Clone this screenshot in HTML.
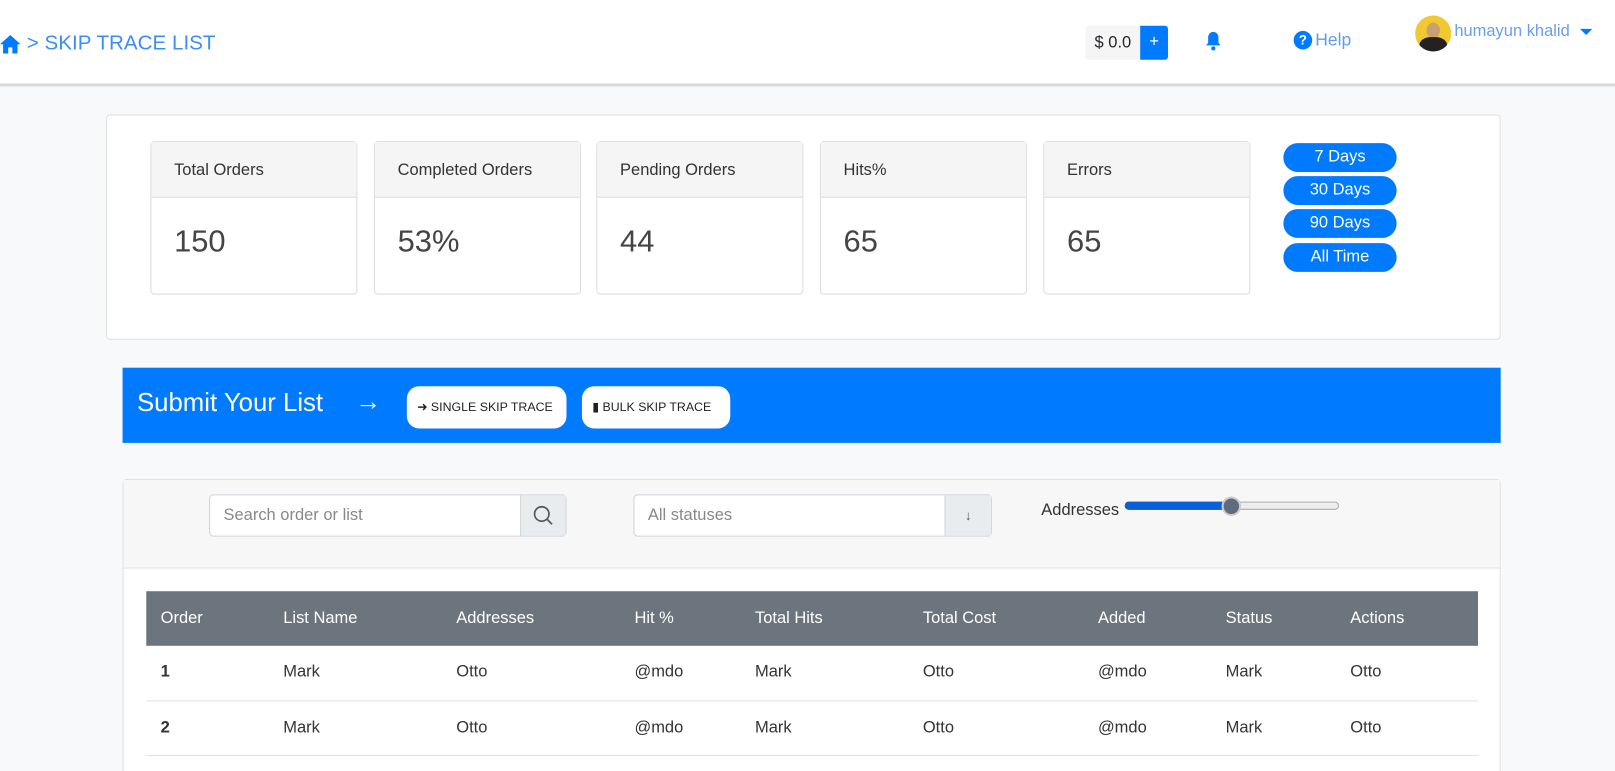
<!DOCTYPE html>
<html><head><style>
*{box-sizing:border-box;margin:0;padding:0}
html,body{width:1615px;height:771px;overflow:hidden;background:#f8f9fa}
#w{width:1568px;height:749px;position:relative;transform:scale(1.02997);transform-origin:0 0;font-family:"Liberation Sans",sans-serif;color:#212529}
.hdr{position:absolute;left:0;top:0;width:1568px;height:84px;background:#fff;border-bottom:3px solid #d9d9d9}
.abs{position:absolute}
.card{position:absolute;top:137px;width:201px;height:149px;border:1px solid #dcdcdc;border-radius:4px;background:#fff}
.card .h{height:54px;background:#f5f5f5;border-bottom:1px solid #dcdcdc;padding:19px 0 0 22px;font-size:16px;color:#333}
.card .v{padding:26px 0 0 22px;font-size:30px;color:#444;font-weight:300}
.pill{position:absolute;left:1246px;width:110px;height:28px;background:#007bff;color:#fff;border-radius:14px;text-align:center;font-size:16px;line-height:28px}
.btn{position:absolute;top:375px;height:41px;background:#fff;border-radius:12px;font-size:12px;color:#222;line-height:41px;padding-left:10px}
.hbar{position:absolute;left:142px;top:574px;width:1293px;height:53px;background:#6c757d}
th{background:transparent;color:#fff;font-weight:normal;text-align:left;font-size:16px;height:53px;padding-left:14px;border:none}
td{font-size:16px;height:53px;padding-left:14px;border-bottom:1px solid #dee2e6;color:#333}
</style></head><body><div id="w">
<div class="hdr">
 <svg class="abs" style="left:0;top:34px" width="20" height="18" viewBox="0 0 20 18"><path d="M10 0 L20 9 L17 9 L17 18 L12 18 L12 12 L8 12 L8 18 L3 18 L3 9 L0 9Z" fill="#007bff"/></svg>
 <div class="abs" style="left:26px;top:31px;font-size:20px;color:#3b8ef7">&gt; SKIP TRACE LIST</div>
 <div class="abs" style="left:1054px;top:25px;width:53px;height:33px;background:#f5f5f5;font-size:16px;line-height:33px;text-align:center;border-radius:3px 0 0 3px">$ 0.0</div>
 <div class="abs" style="left:1107px;top:25px;width:27px;height:33px;background:#007bff;color:#fff;text-align:center;line-height:32px;font-size:16px;border-radius:0 3px 3px 0">+</div>
 <svg class="abs" style="left:1170px;top:30px" width="16" height="20" viewBox="0 0 16 20"><path d="M8 1c-3 0-5 2.5-5 5.5v5L1 14h14l-2-2.5v-5C13 3.5 11 1 8 1z" fill="#007bff"/><circle cx="8" cy="17" r="2" fill="#007bff"/></svg>
 <div class="abs" style="left:1256px;top:30px;width:18px;height:18px;border-radius:50%;background:#007bff;color:#fff;font-size:13px;font-weight:bold;text-align:center;line-height:18px">?</div>
 <div class="abs" style="left:1277px;top:29px;font-size:17px;color:#5d9cf5">Help</div>
 <div class="abs" style="left:1374px;top:15px;width:35px;height:35px;border-radius:50%;overflow:hidden;background:#f0c830"><div style="position:absolute;left:11px;top:7px;width:13px;height:15px;border-radius:50%;background:#c9a071"></div><div style="position:absolute;left:4px;top:21px;width:27px;height:20px;border-radius:40% 40% 0 0;background:#222"></div></div>
 <div class="abs" style="left:1412px;top:22px;font-size:16px;color:#6a9ef0">humayun khalid</div>
 <div class="abs" style="left:1534px;top:28px;border-left:6px solid transparent;border-right:6px solid transparent;border-top:6px solid #007bff"></div>
</div>
<div class="abs" style="left:103px;top:111px;width:1354px;height:219px;background:#fff;border:1px solid #e0e0e0;border-radius:4px"></div>
<div class="card" style="left:146px"><div class="h">Total Orders</div><div class="v">150</div></div>
<div class="card" style="left:363px"><div class="h">Completed Orders</div><div class="v">53%</div></div>
<div class="card" style="left:579px"><div class="h">Pending Orders</div><div class="v">44</div></div>
<div class="card" style="left:796px"><div class="h">Hits%</div><div class="v">65</div></div>
<div class="card" style="left:1013px"><div class="h">Errors</div><div class="v">65</div></div>
<div class="pill" style="top:139px">7 Days</div>
<div class="pill" style="top:171px">30 Days</div>
<div class="pill" style="top:203px">90 Days</div>
<div class="pill" style="top:236px">All Time</div>
<div class="abs" style="left:119px;top:357px;width:1338px;height:73px;background:#007bff"></div>
<div class="abs" style="left:133px;top:377px;font-size:25px;color:#fff">Submit Your List</div>
<div class="abs" style="left:345px;top:376px;font-size:25px;color:#fff">&rarr;</div>
<div class="btn" style="left:395px;width:155px">&#10140; SINGLE SKIP TRACE</div>
<div class="btn" style="left:565px;width:144px">&#9646; BULK SKIP TRACE</div>
<div class="abs" style="left:119px;top:465px;width:1338px;height:320px;background:#fff;border:1px solid #e0e0e0;border-radius:4px"></div>
<div class="abs" style="left:120px;top:466px;width:1336px;height:86px;background:#f7f7f7;border-bottom:1px solid #e0e0e0"></div>
<div class="abs" style="left:203px;top:480px;width:347px;height:41px;border:1px solid #ced4da;border-radius:4px;background:#fff;font-size:16px;color:#888;padding:11px 0 0 13px">Search order or list</div>
<div class="abs" style="left:505px;top:481px;width:44px;height:39px;background:#e9ecef;border-left:1px solid #ced4da"><svg width="44" height="39"><circle cx="20" cy="18" r="7" stroke="#555" stroke-width="1.6" fill="none"/><path d="M25 23l5 5" stroke="#555" stroke-width="1.6"/></svg></div>
<div class="abs" style="left:615px;top:480px;width:348px;height:41px;border:1px solid #ced4da;border-radius:4px;background:#fff;font-size:16px;color:#888;padding:11px 0 0 13px">All statuses</div>
<div class="abs" style="left:917px;top:481px;width:45px;height:39px;background:#e9ecef;border-left:1px solid #ced4da;text-align:center;line-height:39px;font-size:13px;color:#555">&darr;</div>
<div class="abs" style="left:1011px;top:487px;font-size:16px;color:#333">Addresses</div>
<div class="abs" style="left:1092px;top:487px;width:208px;height:8px;border:1px solid #aaa;border-radius:4px;background:#eee"></div>
<div class="abs" style="left:1092px;top:487px;width:104px;height:8px;border-radius:4px;background:#0a5ed8"></div>
<div class="abs" style="left:1186px;top:482px;width:19px;height:19px;border-radius:50%;background:#5f6b7a;border:2px solid #ccc"></div>
<div class="hbar"></div>
<table class="abs" style="left:142px;top:574px;width:1293px;border-collapse:collapse">
<tr><th style="width:119px">Order</th><th style="width:168px">List Name</th><th style="width:173px">Addresses</th><th style="width:117px">Hit %</th><th style="width:163px">Total Hits</th><th style="width:170px">Total Cost</th><th style="width:124px">Added</th><th style="width:121px">Status</th><th>Actions</th></tr>
<tr><td style="font-weight:bold">1</td><td>Mark</td><td>Otto</td><td>@mdo</td><td>Mark</td><td>Otto</td><td>@mdo</td><td>Mark</td><td>Otto</td></tr>
<tr><td style="font-weight:bold">2</td><td>Mark</td><td>Otto</td><td>@mdo</td><td>Mark</td><td>Otto</td><td>@mdo</td><td>Mark</td><td>Otto</td></tr>
</table>
</div></body></html>
